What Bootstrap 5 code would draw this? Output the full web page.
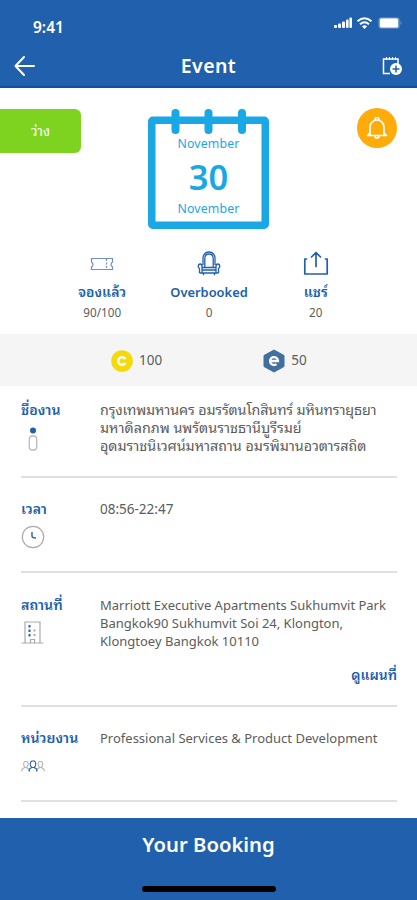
<!DOCTYPE html>
<html lang="th">
<head>
<meta charset="utf-8">
<meta name="viewport" content="width=device-width, initial-scale=1">
<title>Event</title>
<link href="https://cdn.jsdelivr.net/npm/bootstrap@5.3.0/dist/css/bootstrap.min.css" rel="stylesheet">
<style>
:root{--brand:#2060ad;--sky:#1aa7e5}
body{font-family:"Noto Sans","Noto Sans Thai Looped","Loma","Garuda","Waree",sans-serif;color:#5c5c5c;font-size:13.5px;overflow:hidden}
svg{display:block;flex:none}
.screen{height:900px}
.app-head{background:var(--brand);height:88px;border-bottom:2px solid #1450a0}
.status-bar{height:44px;padding:17px 15px 0 33px}
.clock-text{font-size:15.5px;line-height:20px;font-weight:600}
.title-bar{height:42px;padding:1px 14px 0 14px}
.app-title{font-size:19.5px;line-height:24px;font-weight:600;letter-spacing:.4px}
.hero{height:157px;padding:20px 20px 0 0}
.free-tag{width:81px;height:44px;margin-top:1px;background:#7ed321;border-radius:0 6px 6px 0;font-size:13.5px}
.calendar{width:121px;height:121px;margin-left:67px}
.cal-body{color:var(--sky);padding-top:27px}
.month{font-size:12.3px;line-height:18px;letter-spacing:.15px}
.day{font-size:34.5px;line-height:47px;font-weight:600}
.bell{width:40px;height:40px;background:#ffab09}
.stats{height:89px;padding:4px 48px 0 49px}
.stat{width:106.5px}
.stat-name{font-size:14px;line-height:20px;font-weight:600;color:var(--brand);margin-top:5px}
.stat-name.latin{font-size:12.9px}
.stat-num{font-size:11.7px;line-height:20px}
.stat svg{height:28px}
.tokens{height:52px;background:#f5f5f5;padding:1px 0 0 111px;gap:101px}
.token{font-size:13.5px;gap:6px}
.details{padding:0 20px 0 21px}
.detail{border-bottom:2px solid #dfe0e1;padding-top:14px}
.label-col{width:79px}
.label-text{color:var(--brand);font-weight:600;font-size:14.1px;line-height:20px;white-space:nowrap}
.info{line-height:18px;font-size:13px;white-space:nowrap;padding-top:1px}
.info.thai{font-size:14.3px}
.tight{letter-spacing:-.13px}
.info.hours{font-size:13.5px}
.map-link{color:var(--brand);font-weight:600;font-size:13.9px;line-height:18px}
.h-name{height:92px}.h-time{height:95px;padding-top:21px}.h-place{height:134px;padding-top:22px}.h-team{height:95px;padding-top:21px}
.booking{background:var(--brand);height:82px;padding-top:12px}
.booking-title{font-size:20.3px;line-height:28px;font-weight:600}
.home-bar{width:134px;height:6px;background:#000;margin-bottom:8px}
</style>
<script src="https://cdn.jsdelivr.net/npm/bootstrap@5.3.0/dist/js/bootstrap.bundle.min.js"></script>
</head>
<body>
<div class="screen d-flex flex-column bg-white">
<header class="app-head text-white">
 <div class="status-bar d-flex justify-content-between align-items-start">
  <span class="clock-text">9:41</span>
  <svg width="68" height="14" viewBox="0 0 68 14" fill="#fff"><rect y="8" width="3" height="3" rx="1"/><rect x="4" y="6.5" width="3" height="4.5" rx="1"/><rect x="8" y="4.5" width="3" height="6.5" rx="1"/><rect x="12" y="2.5" width="2.6" height="8.5" rx="1"/><rect x="15.4" y=".5" width="2.6" height="10.5" rx="1"/><g fill="none" stroke="#fff" stroke-width="2"><path d="M23.5 4.2q7-6 14 0M26 7.2q4.500-4 9 0"/></g><path d="M28 9.300q2.500-2 5 0L30.500 12z"/><rect x="44.500" y=".5" width="21" height="11" rx="2.500" opacity=".4"/><rect x="46" y="1.500" width="18" height="9" rx="1.500"/><path d="M66.500 4q2 2 0 4z" opacity=".4"/></svg>
 </div>
 <div class="title-bar d-flex justify-content-between align-items-center">
  <svg width="22" height="22" viewBox="0 0 22 22" fill="none" stroke="#fff" stroke-width="2" stroke-linecap="round" stroke-linejoin="round"><path d="M10 2 1.500 11 10 20M1.500 11H20"/></svg>
  <span class="app-title">Event</span>
  <svg width="22" height="20" viewBox="0 0 22 20" fill="none" stroke="#fff" stroke-width="1.500"><path d="M9 17.500H2.500V3H17v6"/><path d="M5.500 1v3M8.500 1v3M11.500 1v3M14.500 1v3" stroke-width="1"/><circle cx="15" cy="13" r="6" fill="#fff" stroke="none"/><path d="M15 9.500v7M11.500 13h7" stroke="#2060ad"/></svg>
 </div>
</header>
<main class="flex-grow-1">
 <section class="hero d-flex align-items-start">
  <div class="free-tag d-flex align-items-center justify-content-center text-white">ว่าง</div>
  <div class="calendar position-relative">
   <svg class="position-absolute top-0 start-0" width="121" height="121" viewBox="0 0 121 121"><rect x="3.750" y="12.250" width="113.500" height="105" rx="1" fill="none" stroke="#1aa7e5" stroke-width="7.500" stroke-linejoin="round"/><path d="M27.500 5v17M60.500 5v17M94 5v17" stroke="#1aa7e5" stroke-width="8" stroke-linecap="round"/></svg>
   <div class="cal-body position-relative text-center"><div class="month">November</div><div class="day">30</div><div class="month">November</div></div>
  </div>
  <div class="bell rounded-circle d-flex align-items-center justify-content-center ms-auto">
   <svg width="22" height="22" viewBox="0 0 22 22" fill="none" stroke="#fff" stroke-width="1.700" stroke-linecap="round" stroke-linejoin="round"><path d="M4 18V10a7 7 0 0 1 14 0v8M1.500 18.500h19M9 2.500a2 2 0 0 1 4 0M9 19a2 2 0 0 0 4 0M2 18l2-2M20 18l-2-2"/></svg>
  </div>
 </section>
 <section class="stats d-flex justify-content-between text-center">
  <div class="stat d-flex flex-column align-items-center">
   <svg width="24" viewBox="0 0 24 28" fill="none" stroke="#6f8fbe" stroke-width="1.200"><path d="M1.500 13V9.500h21V13q-3 2.500 0 5v2.500h-21V18q3-2.500 0-5z"/><path d="M16.500 10v10" stroke-dasharray="2 1.500"/></svg>
   <div class="stat-name">จองแล้ว</div><div class="stat-num">90/100</div>
  </div>
  <div class="stat d-flex flex-column align-items-center">
   <svg width="24" viewBox="0 0 24 28" fill="none" stroke="#2060ad" stroke-width="1.300" stroke-linejoin="round"><path d="M6 16V9q0-2.500 1.500-4Q9 3 12 3t4.500 2Q18 6.500 18 9v7M7.800 18.500V9.500q0-4.500 4.200-4.500t4.200 4.500v9M5 18.500h14M5 21h14M2.500 24h19M5 24v-6.500Q5 15 3.200 15T1.200 17.500q0 1 1.300 2V24M19 24v-6.500q0-2.500 1.800-2.500t2 2.500q0 1-1.300 2V24M6.500 24v2.300M17.500 24v2.300"/></svg>
   <div class="stat-name latin">Overbooked</div><div class="stat-num">0</div>
  </div>
  <div class="stat d-flex flex-column align-items-center">
   <svg width="26" viewBox="0 0 26 28" fill="none" stroke="#2060ad" stroke-width="1.700" stroke-linecap="round" stroke-linejoin="round"><path d="M3.500 10H1.800v15h22.400V10h-1.700M13 17.500V3.500M8.500 8 13 3.500 17.500 8"/></svg>
   <div class="stat-name">แชร์</div><div class="stat-num">20</div>
  </div>
 </section>
 <section class="tokens d-flex align-items-center">
  <div class="token d-flex align-items-center">
   <svg width="22" height="22" viewBox="0 0 22 22"><circle cx="11" cy="11" r="10.800" fill="#f5d90a"/><path d="M14.300 9a3.800 3.800 0 1 0 0 4" fill="none" stroke="#fff" stroke-width="2.500"/></svg><span>100</span>
  </div>
  <div class="token d-flex align-items-center">
   <svg width="22" height="24" viewBox="0 0 22 24"><path d="M11 1 21 6.500v11L11 23 1 17.500v-11z" fill="#416f9f" stroke="#416f9f" stroke-linejoin="round"/><path d="M7 12h8a4 4 0 1 0-1.500 3.200" fill="none" stroke="#fff" stroke-width="2.300"/></svg><span>50</span>
  </div>
 </section>
 <section class="details">
  <div class="detail h-name d-flex">
   <div class="label-col"><div class="label-text">ชื่องาน</div>
    <svg class="ms-1" width="16" height="34" viewBox="0 0 16 34"><circle cx="8" cy="10.500" r="3" fill="#2060ad"/><rect x="4.300" y="16" width="7.400" height="14" rx="3" fill="none" stroke="#bbb" stroke-width="1.300"/></svg></div>
   <div class="info thai"><span class="tight">กรุงเทพมหานคร อมรรัตนโกสินทร์ มหินทรายุธยา</span><br>มหาดิลกภพ นพรัตนราชธานีบูรีรมย์<br>อุดมราชนิเวศน์มหาสถาน อมรพิมานอวตารสถิต</div>
  </div>
  <div class="detail h-time d-flex">
   <div class="label-col"><div class="label-text">เวลา</div>
    <svg class="mt-1" width="24" height="26" viewBox="0 0 24 26" fill="none"><circle cx="12" cy="14" r="10.700" stroke="#aaa" stroke-width="1.200"/><path d="M11 9v4q0 2 4 2" stroke="#2060ad" stroke-width="1.400"/></svg></div>
   <div class="info hours">08:56-22:47</div>
  </div>
  <div class="detail h-place">
   <div class="d-flex">
    <div class="label-col"><div class="label-text">สถานที่</div>
     <svg class="mt-1" width="24" height="26" viewBox="0 0 24 26" fill="none"><path d="M4 24V3h15v21M.5 24h22M9.500 24v-3.500h4V24" stroke="#aaa" stroke-width="1.200"/><path d="M7.500 6h2v2.500h-2zM7.500 10.500h2V13h-2zM7.500 15h2v2.500h-2z" fill="#2060ad"/><path d="M12.500 10.500h2v2h-2zM12.500 15h2v2h-2z" fill="#aaa"/></svg></div>
    <div class="info">Marriott Executive Apartments Sukhumvit Park<br>Bangkok90 Sukhumvit Soi 24, Klongton,<br>Klongtoey Bangkok 10110</div>
   </div>
   <div class="map-link text-end mt-3">ดูแผนที่</div>
  </div>
  <div class="detail h-team d-flex">
   <div class="label-col"><div class="label-text">หน่วยงาน</div>
    <svg class="mt-2" width="24" height="20" viewBox="0 0 24 20" fill="none" stroke-width="1.100"><path d="M.8 15.500v-2l2.700-2M8 15.500v-2l-2.500-2M3.500 5.500h2.500q1.200 1 1.200 2.700T5.500 11.500h-1.500Q2.700 10 2.700 8.200t.8-2.700M16 15.500v-2l2.500-2M23.200 15.500v-2l-2.700-2M18 5.500h2.500q1.200 1 1.200 2.700t-1.500 3.300h-1.500Q17.200 10 17.200 8.200t.8-2.700" stroke="#b5b5b5"/><path d="M8.300 15.500V13l2.500-1.500M15.700 15.500V13l-2.500-1.500M10.700 5h2.600q1.500 1 1.500 3t-1.500 3.500h-2.600Q9.200 10 9.200 8t1.500-3" stroke="#2060ad"/></svg></div>
   <div class="info">Professional Services &amp; Product Development</div>
  </div>
 </section>
</main>
<footer class="booking text-white d-flex flex-column align-items-center justify-content-between"><div class="booking-title">Your Booking</div><div class="home-bar rounded-pill"></div></footer>
</div>
</body>
</html>
